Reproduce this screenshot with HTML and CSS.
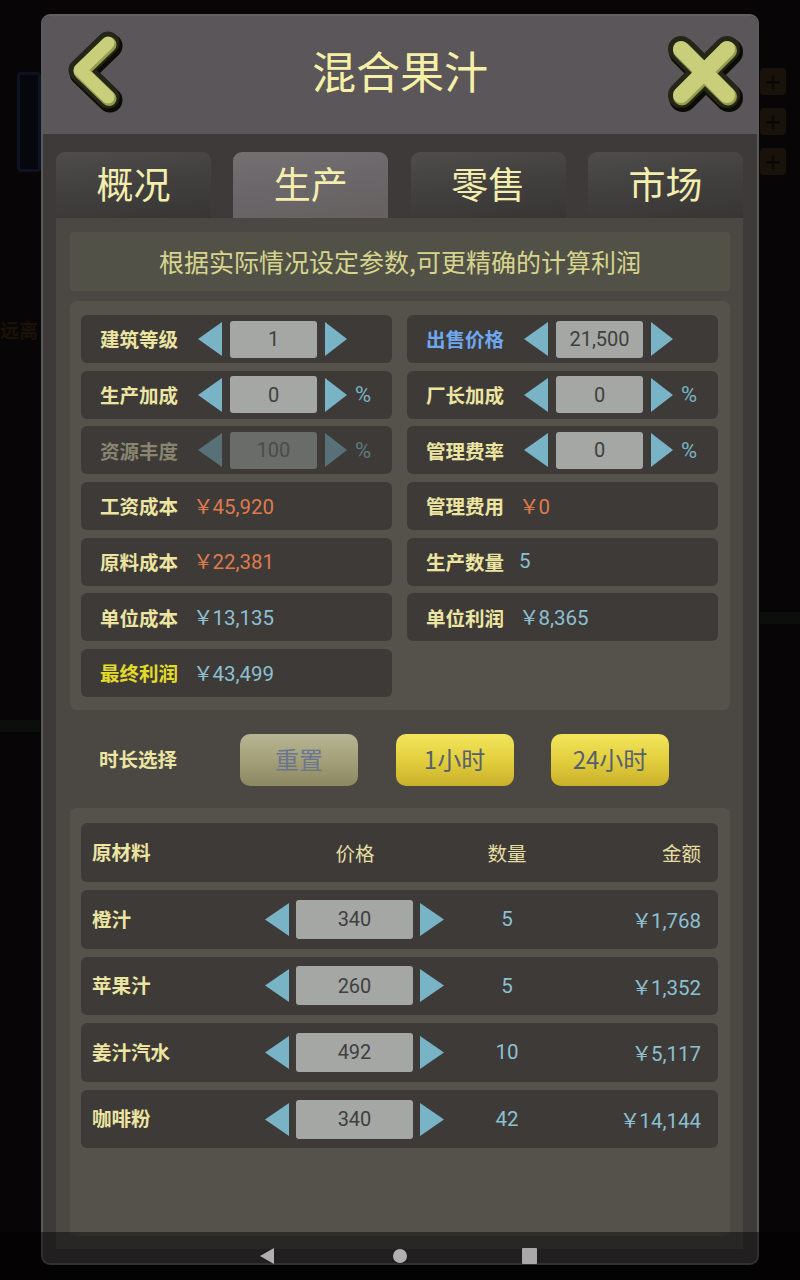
FILE: index.html
```html
<!DOCTYPE html>
<html lang="zh-CN">
<head>
<meta charset="utf-8">
<title>混合果汁</title>
<link rel="stylesheet" href="styles.css">
</head>
<body>
<div class="scene">
  <div class="bg-card"></div>
  <div class="bg-text bg-t1">远离</div>
  <div class="bg-plus bg-p1">+</div>
  <div class="bg-plus bg-p2">+</div>
  <div class="bg-plus bg-p3">+</div>
  <div class="bg-strip bg-s1"></div>
  <div class="bg-strip bg-s2"></div>
</div>

<div class="modal">
  <header class="head">
    <svg class="back" width="64" height="80" viewBox="0 0 64 80">
      <polyline class="ic-shadow" points="44,11 16,38 44,65" transform="translate(2,3)"/>
      <polyline class="ic-outline" points="44,11 16,38 44,65"/>
      <polyline class="ic-dark" points="44,11 16,38 44,65" transform="translate(1,1.5)"/>
      <polyline class="ic-fill" points="44,11 16,38 44,65"/>
    </svg>
    <h1 class="title">混合果汁</h1>
    <svg class="close" width="80" height="80" viewBox="0 0 80 80">
      <g transform="translate(2,3)" class="ic-shadow x">
        <line x1="17" y1="17" x2="63" y2="63"/><line x1="63" y1="17" x2="17" y2="63"/>
      </g>
      <g class="ic-outline x">
        <line x1="17" y1="17" x2="63" y2="63"/><line x1="63" y1="17" x2="17" y2="63"/>
      </g>
      <g class="ic-dark x" transform="translate(1,1.5)">
        <line x1="17" y1="17" x2="63" y2="63"/><line x1="63" y1="17" x2="17" y2="63"/>
      </g>
      <g class="ic-fill x">
        <line x1="17" y1="17" x2="63" y2="63"/><line x1="63" y1="17" x2="17" y2="63"/>
      </g>
    </svg>
  </header>

  <div class="body">
    <nav class="tabs">
      <div class="tab">概况</div>
      <div class="tab active">生产</div>
      <div class="tab">零售</div>
      <div class="tab">市场</div>
    </nav>

    <div class="panel">
      <div class="notice">根据实际情况设定参数,可更精确的计算利润</div>

      <section class="params">
        <div class="prow">
          <span class="plabel">建筑等级</span>
          <svg class="tri" viewBox="0 0 24 34"><polygon points="24,0 24,34 0,17"/></svg>
          <span class="box">1</span>
          <svg class="tri r" viewBox="0 0 22 34"><polygon points="0,0 0,34 22,17"/></svg>
        </div>
        <div class="prow">
          <span class="plabel blue">出售价格</span>
          <svg class="tri" viewBox="0 0 24 34"><polygon points="24,0 24,34 0,17"/></svg>
          <span class="box">21,500</span>
          <svg class="tri r" viewBox="0 0 22 34"><polygon points="0,0 0,34 22,17"/></svg>
        </div>

        <div class="prow">
          <span class="plabel">生产加成</span>
          <svg class="tri" viewBox="0 0 24 34"><polygon points="24,0 24,34 0,17"/></svg>
          <span class="box">0</span>
          <svg class="tri r" viewBox="0 0 22 34"><polygon points="0,0 0,34 22,17"/></svg>
          <span class="pct">%</span>
        </div>
        <div class="prow">
          <span class="plabel">厂长加成</span>
          <svg class="tri" viewBox="0 0 24 34"><polygon points="24,0 24,34 0,17"/></svg>
          <span class="box">0</span>
          <svg class="tri r" viewBox="0 0 22 34"><polygon points="0,0 0,34 22,17"/></svg>
          <span class="pct">%</span>
        </div>

        <div class="prow disabled">
          <span class="plabel">资源丰度</span>
          <svg class="tri" viewBox="0 0 24 34"><polygon points="24,0 24,34 0,17"/></svg>
          <span class="box">100</span>
          <svg class="tri r" viewBox="0 0 22 34"><polygon points="0,0 0,34 22,17"/></svg>
          <span class="pct">%</span>
        </div>
        <div class="prow">
          <span class="plabel">管理费率</span>
          <svg class="tri" viewBox="0 0 24 34"><polygon points="24,0 24,34 0,17"/></svg>
          <span class="box">0</span>
          <svg class="tri r" viewBox="0 0 22 34"><polygon points="0,0 0,34 22,17"/></svg>
          <span class="pct">%</span>
        </div>

        <div class="prow val">
          <span class="plabel">工资成本</span>
          <span class="value orange"><span class="yen">￥</span>45,920</span>
        </div>
        <div class="prow val">
          <span class="plabel">管理费用</span>
          <span class="value orange"><span class="yen">￥</span>0</span>
        </div>

        <div class="prow val">
          <span class="plabel">原料成本</span>
          <span class="value orange"><span class="yen">￥</span>22,381</span>
        </div>
        <div class="prow val">
          <span class="plabel">生产数量</span>
          <span class="value num">5</span>
        </div>

        <div class="prow val">
          <span class="plabel">单位成本</span>
          <span class="value"><span class="yen">￥</span>13,135</span>
        </div>
        <div class="prow val">
          <span class="plabel">单位利润</span>
          <span class="value"><span class="yen">￥</span>8,365</span>
        </div>

        <div class="prow val">
          <span class="plabel gold">最终利润</span>
          <span class="value"><span class="yen">￥</span>43,499</span>
        </div>
      </section>

      <div class="duration">
        <span class="dlabel">时长选择</span>
        <div class="btn reset">重置</div>
        <div class="btn gold-btn">1小时</div>
        <div class="btn gold-btn">24小时</div>
      </div>

      <section class="materials">
        <div class="mrow mhead">
          <span class="mname">原材料</span>
          <span class="mcol">价格</span>
          <span class="mcol">数量</span>
          <span class="mcol right">金额</span>
        </div>
        <div class="mrow">
          <span class="mname">橙汁</span>
          <span class="mstep">
            <svg class="mtri" viewBox="0 0 24 33"><polygon points="24,0 24,33 0,16.5"/></svg>
            <span class="mbox">340</span>
            <svg class="mtri" viewBox="0 0 24 33"><polygon points="0,0 0,33 24,16.5"/></svg>
          </span>
          <span class="mqty">5</span>
          <span class="mamt"><span class="yen">￥</span>1,768</span>
        </div>
        <div class="mrow">
          <span class="mname">苹果汁</span>
          <span class="mstep">
            <svg class="mtri" viewBox="0 0 24 33"><polygon points="24,0 24,33 0,16.5"/></svg>
            <span class="mbox">260</span>
            <svg class="mtri" viewBox="0 0 24 33"><polygon points="0,0 0,33 24,16.5"/></svg>
          </span>
          <span class="mqty">5</span>
          <span class="mamt"><span class="yen">￥</span>1,352</span>
        </div>
        <div class="mrow">
          <span class="mname">姜汁汽水</span>
          <span class="mstep">
            <svg class="mtri" viewBox="0 0 24 33"><polygon points="24,0 24,33 0,16.5"/></svg>
            <span class="mbox">492</span>
            <svg class="mtri" viewBox="0 0 24 33"><polygon points="0,0 0,33 24,16.5"/></svg>
          </span>
          <span class="mqty">10</span>
          <span class="mamt"><span class="yen">￥</span>5,117</span>
        </div>
        <div class="mrow">
          <span class="mname">咖啡粉</span>
          <span class="mstep">
            <svg class="mtri" viewBox="0 0 24 33"><polygon points="24,0 24,33 0,16.5"/></svg>
            <span class="mbox">340</span>
            <svg class="mtri" viewBox="0 0 24 33"><polygon points="0,0 0,33 24,16.5"/></svg>
          </span>
          <span class="mqty">42</span>
          <span class="mamt"><span class="yen">￥</span>14,144</span>
        </div>
      </section>
    </div>
  </div>
</div>

<div class="navbar">
  <svg class="nav-back" width="14" height="16" viewBox="0 0 14 16"><polygon points="14,0 14,16 0,8"/></svg>
  <span class="nav-home"></span>
  <span class="nav-recent"></span>
</div>
</body>
</html>
```

FILE: styles.css
```css
* { box-sizing: border-box; margin: 0; padding: 0; }

html, body { width: 800px; height: 1280px; }

body {
  position: relative;
  overflow: hidden;
  background: #080507;
  font-family: "Noto Sans CJK SC", "Noto Sans", sans-serif;
}

/* faint game scene behind the dialog */
.scene { position: absolute; inset: 0; }
.bg-card {
  position: absolute; left: 17px; top: 72px; width: 24px; height: 100px;
  border: 3px solid #0b1222; border-radius: 4px; background: #06070c;
}
.bg-text {
  position: absolute; left: 0; top: 320px;
  font-size: 19px; font-weight: 700; color: #1a1208; line-height: 1;
}
.bg-plus {
  position: absolute; left: 760px; width: 26px; height: 27px;
  background: #19120a; border-radius: 4px;
  color: #0a0806; font: 700 22px/27px "DejaVu Sans", sans-serif; text-align: center;
}
.bg-p1 { top: 68px; }
.bg-p2 { top: 108px; }
.bg-p3 { top: 148px; }
.bg-strip { position: absolute; height: 12px; background: #0a0f0a; }
.bg-s1 { left: 0; top: 720px; width: 40px; }
.bg-s2 { left: 760px; top: 612px; width: 40px; }

/* dialog */
.modal {
  position: relative;
  margin: 14px 0 0 41px;
  width: 718px;
  height: 1251px;
  border: 2px solid #5c595a;
  border-top-color: #625e61;
  border-radius: 9px;
  overflow: hidden;
  background: #3d3a39;
  display: flex;
  flex-direction: column;
}

.head {
  height: 118px;
  flex: none;
  background: #5a5659;
  display: grid;
  grid-template-columns: 1fr auto 1fr;
  align-items: center;
  padding: 0 13px 10px;
}
.back { justify-self: start; margin-left: 8px; margin-top: 4px; overflow: visible; }
.close { justify-self: end; margin-top: 4px; overflow: visible; }
.title {
  font-size: 44px;
  font-weight: 400;
  line-height: 1;
  color: #f6f0a6;
}

.ic-shadow, .ic-outline, .ic-dark, .ic-fill {
  fill: none;
  stroke-linecap: round;
  stroke-linejoin: round;
}
.ic-shadow { stroke: #0c0c07; stroke-width: 25; }
.ic-outline { stroke: #25261a; stroke-width: 23; }
.ic-dark { stroke: #959b4c; stroke-width: 15; }
.ic-fill { stroke: #c9ce7b; stroke-width: 13; }
.x.ic-shadow { stroke-width: 28; }
.x.ic-outline { stroke-width: 26; }
.x.ic-dark { stroke-width: 18; }
.x.ic-fill { stroke-width: 16; }

.body {
  flex: 1;
  display: flex;
  flex-direction: column;
  padding: 18px 14px 14px 13px;
}

.tabs {
  height: 66px;
  flex: none;
  display: flex;
  justify-content: space-between;
}
.tab {
  width: 155px;
  border-radius: 9px 9px 0 0;
  background: linear-gradient(172deg, #4f4d4b 0%, #434140 45%, #383634 100%);
  color: #f3eeae;
  font-size: 37px;
  line-height: 1;
  display: flex;
  align-items: center;
  justify-content: center;
  padding-bottom: 4px;
}
.tab.active {
  background: linear-gradient(172deg, #747072 0%, #6b6669 50%, #66615f 100%);
}

.panel {
  flex: 1;
  background: #4b4844;
  padding: 14px 13px 13px 14px;
  display: flex;
  flex-direction: column;
}

.notice {
  height: 59px;
  flex: none;
  background: #525148;
  border-radius: 3px;
  color: #d7d58d;
  font-size: 25px;
  display: flex;
  align-items: center;
  justify-content: center;
  padding-bottom: 2px;
}

.params {
  margin-top: 10px;
  height: 409px;
  flex: none;
  background: #54524a;
  border-radius: 6px;
  padding: 14px 12px 13px 11px;
  display: grid;
  grid-template-columns: 1fr 1fr;
  grid-template-rows: repeat(7, 48px);
  column-gap: 15px;
  row-gap: 7.66px;
}

.prow {
  background: #3e3a38;
  border-radius: 6px;
  display: flex;
  align-items: center;
  padding-left: 19px;
}
.plabel {
  flex: none;
  width: 98px;
  font-size: 19.5px;
  font-weight: 700;
  line-height: 1;
  color: #ece5a1;
}
.prow.val .plabel { width: 93px; }
.plabel.blue { color: #6ea8ee; }
.plabel.gold { color: #e2da2a; }

.tri { flex: none; width: 24px; height: 34px; fill: #79b3c6; }
.tri.r { width: 22px; }
.box {
  flex: none;
  width: 87px;
  height: 37px;
  margin: 0 8px;
  background: #a4a7a3;
  border-radius: 3px;
  display: flex;
  align-items: center;
  justify-content: center;
  font: 20px "Roboto", sans-serif;
  color: #3f3f3f;
}
.pct {
  margin-left: 8px;
  font: 22px "Roboto", sans-serif;
  color: #79b3c6;
}

.prow.disabled .plabel { color: #898570; }
.prow.disabled .tri { fill: #587078; }
.prow.disabled .box { background: #6a6c69; color: #4b4c49; }
.prow.disabled .pct { color: #5f7981; }

.value {
  font: 20.5px "Roboto", "Noto Sans CJK SC", sans-serif;
  color: #8cc0d2;
  line-height: 1;
}
.value.orange { color: #de7b4d; }
.yen {
  font-family: "Noto Sans CJK SC", sans-serif;
  letter-spacing: -1px;
}

.duration {
  margin-top: 24px;
  height: 52px;
  flex: none;
  display: flex;
  align-items: center;
  padding-left: 29px;
}
.dlabel {
  width: 141px;
  font-size: 19.5px;
  font-weight: 700;
  color: #ece5a1;
  padding-bottom: 4px;
}
.btn {
  width: 118px;
  height: 52px;
  border-radius: 10px;
  font-size: 24px;
  line-height: 1;
  display: flex;
  align-items: center;
  justify-content: center;
  padding-bottom: 3px;
}
.btn + .btn { margin-left: 37.5px; }
.btn.reset {
  background: linear-gradient(180deg, #b7b594 0%, #a3a07a 50%, #8c8860 100%);
  color: #6a7590;
}
.btn.gold-btn {
  background: linear-gradient(180deg, #f3e55c 0%, #e2cf3e 50%, #c9b02a 100%);
  color: #56606f;
}

.materials {
  margin-top: 22px;
  flex: 1;
  background: #54524a;
  border-radius: 6px;
  padding: 15px 12px 11px 11px;
  display: flex;
  flex-direction: column;
  gap: 8px;
}
.mrow {
  height: 58.6px;
  flex: none;
  background: #3e3a38;
  border-radius: 6px;
  display: grid;
  grid-template-columns: 173px 180px 124px 1fr;
  align-items: center;
  padding: 0 17px 0 11px;
}
.mrow.mhead { height: 59px; }
.mname {
  font-size: 19.5px;
  font-weight: 700;
  color: #ece5a1;
  line-height: 1;
  padding-bottom: 2px;
}
.mcol {
  font-size: 19.5px;
  color: #e4dea0;
  text-align: center;
  line-height: 1;
}
.mcol.right { text-align: right; }
.mstep {
  display: flex;
  align-items: center;
}
.mtri { flex: none; width: 24px; height: 33px; fill: #79b3c6; }
.mbox {
  flex: none;
  width: 117px;
  height: 39px;
  margin: 0 7px;
  background: #a4a7a3;
  border-radius: 3px;
  display: flex;
  align-items: center;
  justify-content: center;
  font: 20px "Roboto", sans-serif;
  color: #3f3f3f;
}
.mqty {
  text-align: center;
  font: 20.5px "Roboto", sans-serif;
  color: #8cc0d2;
}
.mamt {
  text-align: right;
  font: 20.5px "Roboto", "Noto Sans CJK SC", sans-serif;
  color: #8cc0d2;
}

/* system navigation bar overlay */
.navbar {
  position: absolute;
  left: 0;
  right: 0;
  bottom: 0;
  height: 48px;
  background: rgba(0, 0, 0, 0.45);
  display: flex;
  align-items: center;
  padding-left: 260px;
}
.nav-back { fill: #b0b0b0; flex: none; }
.nav-home {
  margin-left: 119px;
  width: 14px;
  height: 14px;
  border-radius: 50%;
  background: #b0b0b0;
}
.nav-recent {
  margin-left: 115px;
  width: 15px;
  height: 16px;
  border-radius: 1px;
  background: #a9a9a9;
}
```
